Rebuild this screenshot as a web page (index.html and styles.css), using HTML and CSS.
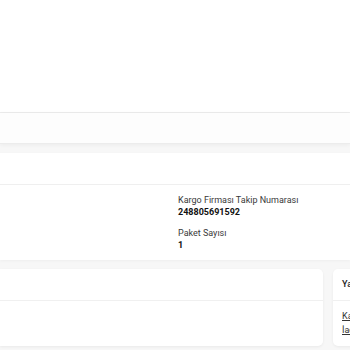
FILE: index.html
```html
<!DOCTYPE html>
<html lang="tr">
<head>
<meta charset="utf-8">
<link rel="stylesheet" href="styles.css">
</head>
<body>
<div class="top"></div>
<div class="subbar"></div>
<main class="main">
  <section class="card shipment">
    <div class="card-head"></div>
    <div class="card-body">
      <div class="spacer"></div>
      <div class="info">
        <div class="field">
          <div class="label">Kargo Firması Takip Numarası</div>
          <div class="value">248805691592</div>
        </div>
        <div class="field">
          <div class="label">Paket Sayısı</div>
          <div class="value">1</div>
        </div>
      </div>
    </div>
  </section>
  <div class="row">
    <section class="card left">
      <div class="card-head"></div>
      <div class="card-body"></div>
    </section>
    <section class="card right">
      <div class="right-head">Yardım</div>
      <div class="right-body">
        <a class="link" href="#">Kargo Takibi</a>
        <a class="link" href="#">İade Talebi</a>
      </div>
    </section>
  </div>
</main>
</body>
</html>
```
FILE: styles.css
```css
html, body {
  margin: 0;
  padding: 0;
  overflow: hidden;
}
body {
  width: 350px;
  height: 350px;
  background: #f7f7f7;
  font-family: Roboto, "Noto Sans", sans-serif;
  color: #222;
}
.top {
  height: 112px;
  background: #fff;
  border-bottom: 1px solid #ececec;
}
.subbar {
  height: 30px;
  background: #fdfdfd;
  border-bottom: 1px solid #ececec;
  box-shadow: 0 1px 4px rgba(0,0,0,0.05);
}
.main {
  padding-top: 9px;
}
.card {
  background: #fff;
}
.shipment {
  box-shadow: 0 1px 3px rgba(0,0,0,0.04);
}
.shipment .card-head {
  height: 31px;
  border-bottom: 1px solid #efefef;
}
.shipment .card-body {
  display: flex;
  height: 75px;
}
.spacer {
  width: 178px;
  flex: none;
}
.info {
  padding-top: 9px;
  display: flex;
  flex-direction: column;
  gap: 9px;
}
.label {
  font-size: 9px;
  line-height: 12px;
  color: #3a3a3a;
}
.value {
  font-size: 9px;
  line-height: 12px;
  font-weight: 700;
  color: #111;
}
.row {
  margin-top: 9px;
  display: flex;
  gap: 10px;
  width: 420px;
}
.left {
  width: 323px;
  flex: none;
  border-radius: 0 5px 5px 0;
  box-shadow: 0 1px 3px rgba(0,0,0,0.06);
}
.left .card-head {
  height: 31px;
  border-bottom: 1px solid #f0f0f0;
}
.left .card-body {
  height: 45px;
}
.right {
  flex: 1;
  border-radius: 5px;
  box-shadow: 0 1px 3px rgba(0,0,0,0.06);
}
.right-head {
  height: 31px;
  line-height: 31px;
  padding-left: 9px;
  font-size: 9px;
  font-weight: 500;
  border-bottom: 1px solid #f0f0f0;
}
.right-body {
  padding: 8px 9px;
  display: flex;
  flex-direction: column;
}
.link {
  font-size: 9px;
  line-height: 14px;
  color: #333;
  text-decoration: underline;
}
```
